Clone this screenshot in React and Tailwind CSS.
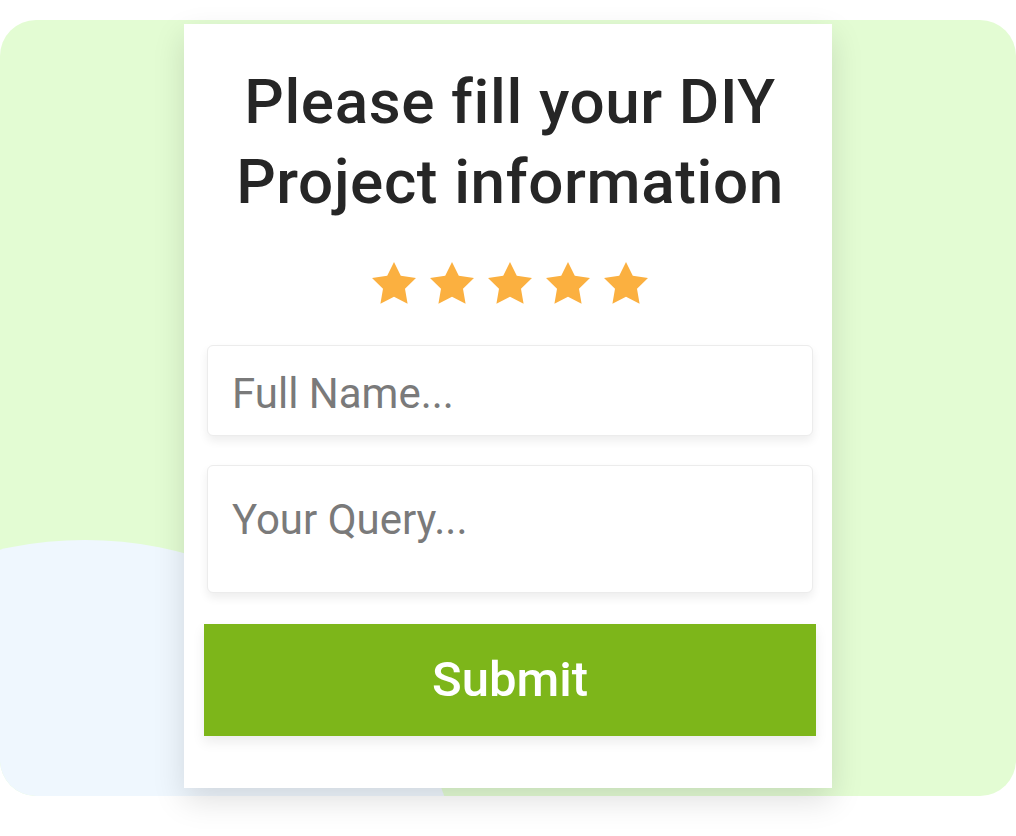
import React from 'react';

const Star = () => (
    <svg width="44" height="42" viewBox="2 2 20 19.1" fill="#fbb040">
        <path d="M12 2l3.09 6.26L22 9.27l-5 4.87 1.18 6.88L12 17.77l-6.18 3.25L7 14.14 2 9.27l6.91-1.01L12 2z" />
    </svg>
);

const App = () => {
    return (
        <div className="w-[1016px] h-[836px] bg-white pt-5" style={{ fontFamily: 'Roboto, "Liberation Sans", sans-serif' }}>
            <div className="relative h-[776px] rounded-[36px] bg-[#e3fcd3]">
                {/* background blob */}
                <div className="absolute inset-0 overflow-hidden rounded-[36px]">
                    <div className="absolute left-[-295px] top-[520px] w-[760px] h-[760px] rounded-full bg-[#eff7fe]"></div>
                </div>

                {/* Form card */}
                <div className="relative mx-auto top-1 w-[648px] h-[764px] bg-white pl-5 pr-4 pt-[38px] shadow-[0_12px_30px_rgba(0,0,0,0.13)]">
                    <h1 className="text-center text-[62px] leading-[80px] font-medium tracking-[0.01em] text-[#262626]">
                        Please fill your DIY<br />Project information
                    </h1>

                    <div className="mt-[40px] flex justify-center gap-[14px]">
                        {[1, 2, 3, 4, 5].map((i) => (
                            <Star key={i} />
                        ))}
                    </div>

                    <form className="flex flex-col" onSubmit={(e) => e.preventDefault()}>
                        <input
                            type="text"
                            placeholder="Full Name..."
                            className="mt-[41px] mx-[3px] h-[91px] pt-[6px] pl-[24px] rounded-md border border-[#ececec] bg-white text-[42px] text-[#333] placeholder:text-[#7a7a7a] shadow-[0_5px_10px_rgba(0,0,0,0.07)] outline-none"
                        />
                        <textarea
                            placeholder="Your Query..."
                            className="mt-[29px] mx-[3px] h-[128px] pt-[22px] pl-[24px] rounded-md border border-[#ececec] bg-white text-[42px] text-[#333] placeholder:text-[#7a7a7a] shadow-[0_5px_10px_rgba(0,0,0,0.07)] outline-none resize-none"
                        ></textarea>
                        <button
                            type="submit"
                            className="mt-[31px] h-[112px] w-full bg-[#7db61a] text-white text-[49px] font-medium shadow-[0_6px_12px_rgba(0,0,0,0.08)]"
                        >
                            Submit
                        </button>
                    </form>
                </div>
            </div>
        </div>
    );
};

export default App;
